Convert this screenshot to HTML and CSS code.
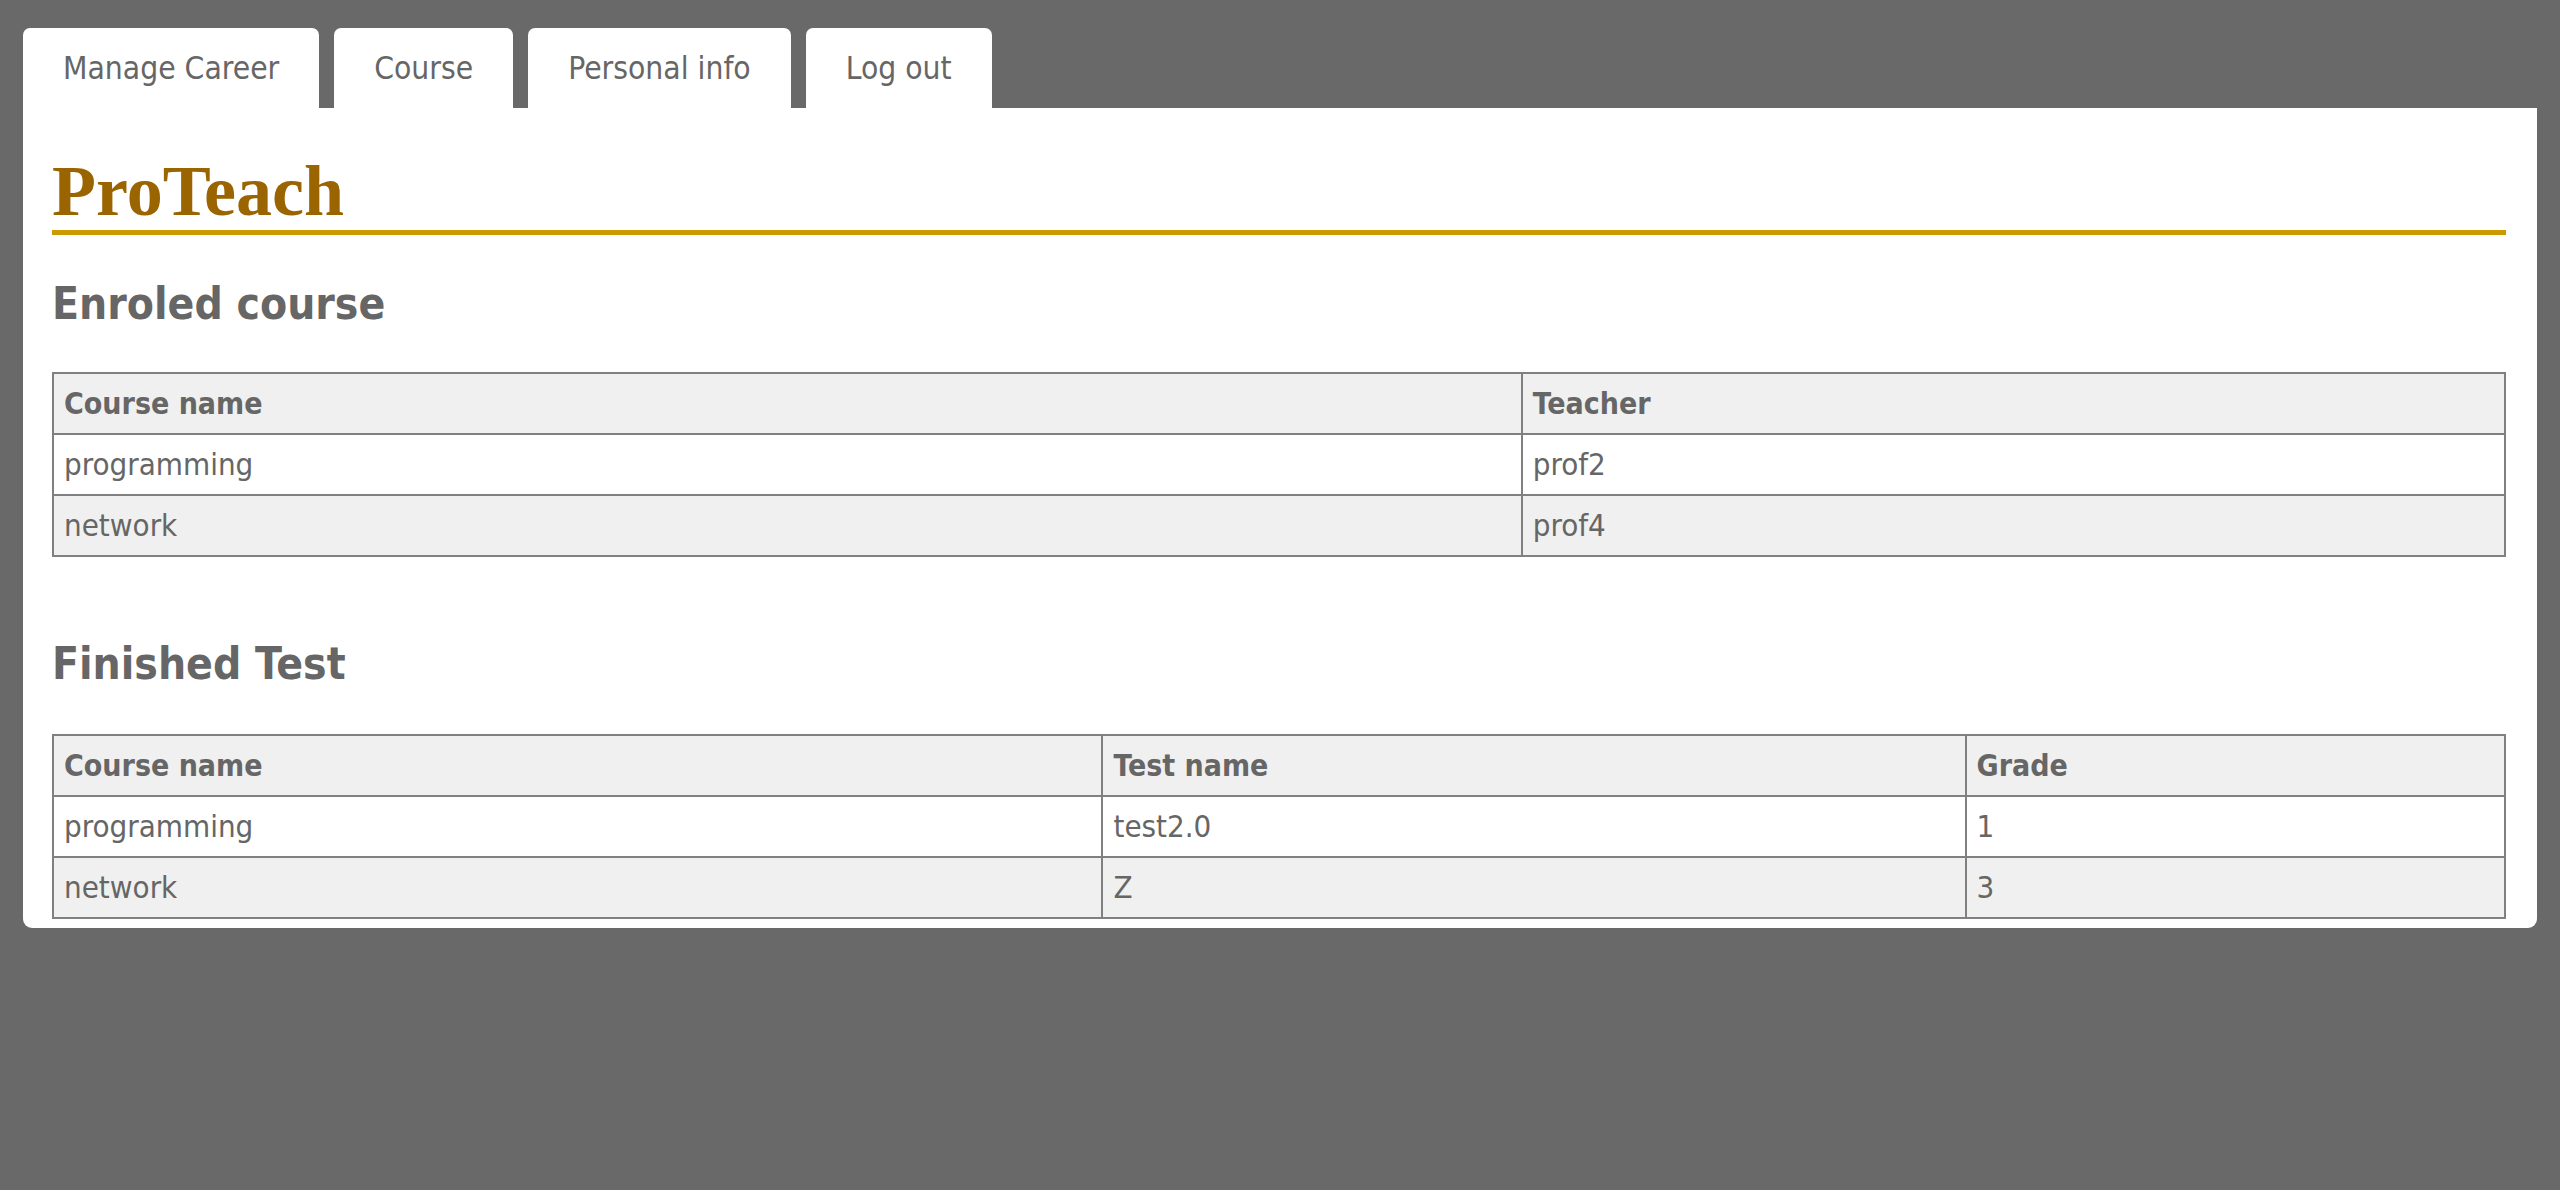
FILE: index.html
```html
<!DOCTYPE html>
<html>
<head>
<meta charset="utf-8">
<title>ProTeach</title>
<link rel="stylesheet" href="styles.css">
</head>
<body>
<div class="page">
  <nav class="tabs">
    <a class="tab" href="#">Manage Career</a>
    <a class="tab" href="#">Course</a>
    <a class="tab" href="#">Personal info</a>
    <a class="tab" href="#">Log out</a>
  </nav>
  <main class="panel">
    <h1 class="brand">ProTeach</h1>
    <h2 class="section-title first">Enroled course</h2>
    <table class="grid">
      <colgroup><col class="c-course1"><col></colgroup>
      <thead><tr><th>Course name</th><th>Teacher</th></tr></thead>
      <tbody>
        <tr class="odd"><td>programming</td><td>prof2</td></tr>
        <tr class="even"><td>network</td><td>prof4</td></tr>
      </tbody>
    </table>
    <h2 class="section-title">Finished Test</h2>
    <table class="grid">
      <colgroup><col class="c-course2"><col class="c-test"><col></colgroup>
      <thead><tr><th>Course name</th><th>Test name</th><th>Grade</th></tr></thead>
      <tbody>
        <tr class="odd"><td>programming</td><td>test2.0</td><td>1</td></tr>
        <tr class="even"><td>network</td><td>Z</td><td>3</td></tr>
      </tbody>
    </table>
  </main>
</div>
</body>
</html>
```

FILE: styles.css
```css
html, body {
  margin: 0;
  padding: 0;
  background: #696969;
}
body {
  font-family: "DejaVu Sans Condensed", "DejaVu Sans", sans-serif;
  font-stretch: condensed;
  color: #666666;
  font-size: 31px;
}
.page {
  padding: 28px 23px 0 23px;
}
.tabs {
  display: flex;
  gap: 15px;
  height: 80px;
}
.tab {
  display: flex;
  align-items: center;
  padding: 0 40px;
  background: #ffffff;
  border-radius: 7px 7px 0 0;
  color: #666666;
  text-decoration: none;
  font-size: 31.5px;
}
.panel {
  background: #ffffff;
  border-radius: 0 0 9px 9px;
  padding: 44px 31px 9px 29px;
}
.brand {
  margin: 0;
  font-family: "Liberation Serif", "DejaVu Serif", serif;
  font-weight: bold;
  font-size: 72px;
  line-height: 78px;
  color: #9a6400;
  border-bottom: 5px solid #cc9900;
}
.section-title {
  margin: 79px 0 42px 0;
  font-size: 44px;
  line-height: 56px;
  font-weight: bold;
  color: #666666;
}
.section-title.first {
  margin-top: 41px;
  margin-bottom: 40px;
}
.grid {
  width: 100%;
  border-collapse: collapse;
  table-layout: fixed;
  border: 2px solid #808080;
}
.grid th, .grid td {
  border: 2px solid #808080;
  padding: 10px 10px;
  line-height: 39px;
  text-align: left;
  font-size: 31px;
  color: #666666;
}
.grid th {
  font-weight: bold;
  font-size: 30px;
  background: #f0f0f0;
}
.grid tr.odd td {
  background: #ffffff;
}
.grid tr.even td {
  background: #f0f0f0;
}
.c-course1 { width: 59.9%; }
.c-course2 { width: 42.8%; }
.c-test { width: 35.2%; }
```
